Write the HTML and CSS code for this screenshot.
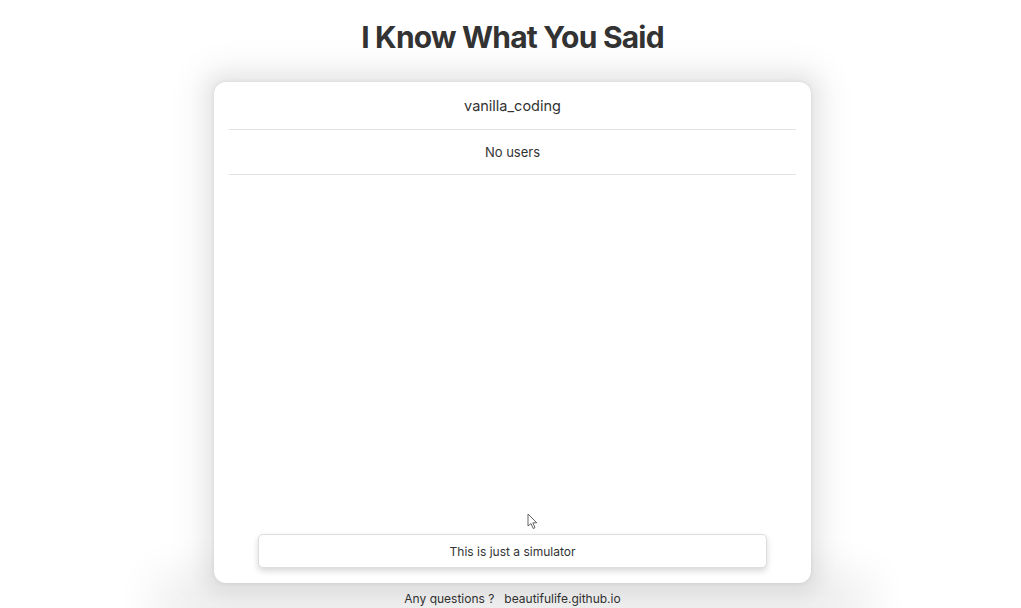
FILE: index.html
```html
<!DOCTYPE html>
<html lang="en">
<head>
<meta charset="utf-8">
<title>I Know What You Said</title>
<link rel="stylesheet" href="styles.css">
</head>
<body>
<div class="page">
  <h1 class="title">I Know What You Said</h1>
  <div class="card">
    <div class="row row-name">vanilla_coding</div>
    <div class="row row-users">No users</div>
    <div class="spacer"></div>
    <button class="sim-btn" type="button">This is just a simulator</button>
    <svg class="cursor" width="12" height="17" viewBox="0 0 12 17" aria-hidden="true">
      <path d="M1 1 L1 13 L4 10.5 L6.2 15.5 L8 14.7 L5.9 9.8 L9.8 9.8 Z" fill="#fff" stroke="#555" stroke-width="0.9" stroke-linejoin="round"/>
    </svg>
  </div>
  <footer class="footer">
    <span>Any questions ?</span>
    <span class="link">beautifulife.github.io</span>
  </footer>
</div>
</body>
</html>
```

FILE: styles.css
```css
html, body {
  margin: 0;
  padding: 0;
  background: #fff;
  overflow: hidden;
}

body {
  font-family: Inter, "Noto Sans", "Liberation Sans", sans-serif;
  color: #333;
}

.page {
  display: flex;
  flex-direction: column;
  align-items: center;
  height: 608px;
  padding-left: 4px;
}

.title {
  margin: 19px 0 0;
  font-size: 30px;
  line-height: 36px;
  font-weight: 700;
  letter-spacing: -0.8px;
  color: #333;
}

.card {
  position: relative;
  margin-top: 27px;
  width: 597px;
  height: 501px;
  box-sizing: border-box;
  padding: 0 15px 15px;
  background: #fff;
  border-radius: 12px;
  display: flex;
  flex-direction: column;
  box-shadow: 0 0 5px rgba(0, 0, 0, 0.09), 0 0 18px 10px rgba(0, 0, 0, 0.055), 0 0 30px 22px rgba(0, 0, 0, 0.04);
  z-index: 1;
}

.row {
  display: flex;
  align-items: center;
  justify-content: center;
  border-bottom: 1px solid #e2e2e2;
}

.row-name {
  height: 47px;
  font-size: 14.5px;
}

.row-users {
  height: 44px;
  font-size: 13px;
}

.spacer {
  flex: 1;
}

.sim-btn {
  margin: 0 29px;
  height: 34px;
  background: #fff;
  border: 1px solid #dedede;
  border-radius: 5px;
  font-family: inherit;
  font-size: 12px;
  color: #333;
  box-shadow: 0 3px 6px rgba(0, 0, 0, 0.16);
}

.cursor {
  position: absolute;
  left: 313px;
  top: 431px;
}

.footer {
  position: relative;
  margin-top: 8px;
  width: 660px;
  display: flex;
  justify-content: center;
  gap: 10px;
  font-size: 12px;
  line-height: 15px;
  color: #333;
  box-shadow: 0 10px 40px 30px rgba(0, 0, 0, 0.06);
  background: rgba(0, 0, 0, 0.05);
}
```
